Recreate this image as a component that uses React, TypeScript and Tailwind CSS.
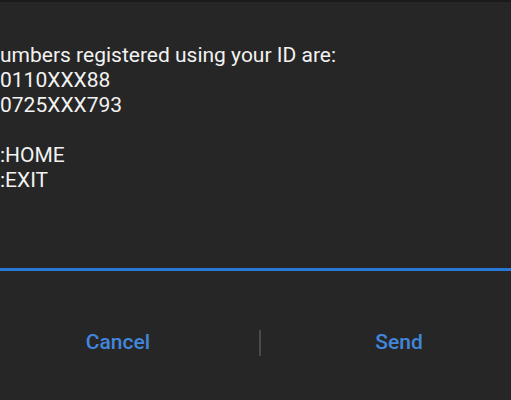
export default function App() {
  const lines = [
    "umbers registered using your ID are:",
    "0110XXX88",
    "0725XXX793",
    "\u00a0",
    ":HOME",
    ":EXIT",
  ];
  return (
    <div
      className="w-[511px] h-[400px] overflow-hidden bg-[#262626] flex flex-col"
      style={{ fontFamily: "Roboto, 'Noto Sans', sans-serif" }}
    >
      <div className="h-[2px] shrink-0 bg-[#1a1a1a]" />
      <div className="h-[269px] shrink-0 pt-[41px] border-b-[3px] border-[#2a78d6] text-[#f2f2f2] text-[21px] leading-[25px] whitespace-pre">
        {lines.map((l, i) => (
          <div key={i}>{l}</div>
        ))}
      </div>
      <div className="flex items-center pt-[52px] overflow-hidden">
        <div className="w-[236px] shrink-0 h-[40px] flex items-center justify-center text-[21px] font-medium text-[#4286dc]">
          Cancel
        </div>
        <div className="w-[23px] shrink-0" />
        <div className="w-[2px] shrink-0 h-[26px] bg-[#4a4a4a]" />
        <div className="w-[276px] shrink-0 h-[40px] flex items-center justify-center text-[21px] font-medium text-[#4286dc]">
          Send
        </div>
      </div>
    </div>
  );
}
